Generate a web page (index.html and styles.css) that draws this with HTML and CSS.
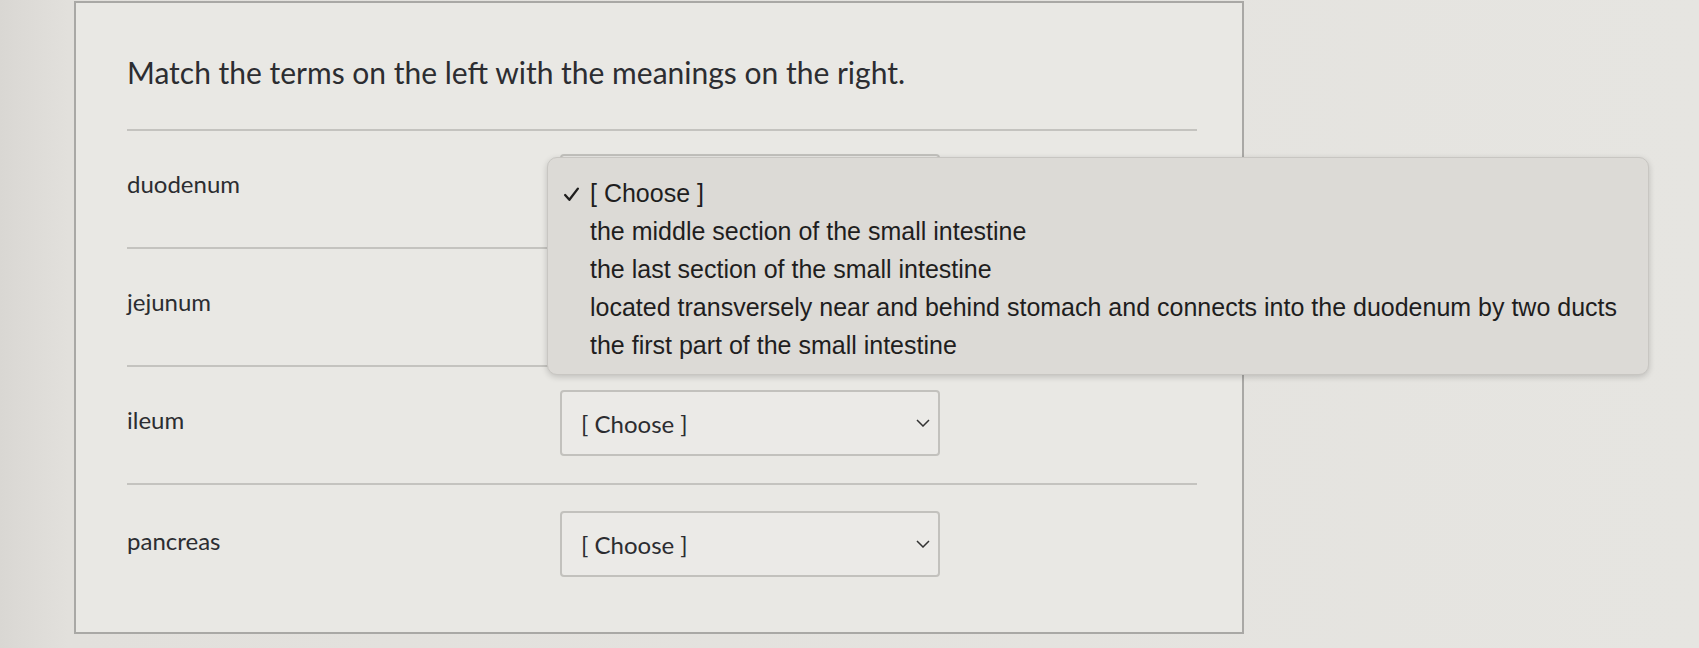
FILE: index.html
```html
<!DOCTYPE html>
<html>
<head>
<meta charset="utf-8">
<link rel="stylesheet" href="styles.css">
</head>
<body>
<div class="page">
  <div class="gutter"></div>
  <div class="card">
    <div class="heading">Match the terms on the left with the meanings on the right.</div>
    <div class="row">
      <div class="term">duodenum</div>
      <div class="select covered"><span>[ Choose ]</span><svg class="chev" viewBox="0 0 14 8"><path d="M1 1l6 6 6-6" fill="none" stroke="#333" stroke-width="1.5"/></svg></div>
    </div>
    <div class="row">
      <div class="term">jejunum</div>
      <div class="select covered"><span>[ Choose ]</span><svg class="chev" viewBox="0 0 14 8"><path d="M1 1l6 6 6-6" fill="none" stroke="#333" stroke-width="1.5"/></svg></div>
    </div>
    <div class="row">
      <div class="term">ileum</div>
      <div class="select"><span>[ Choose ]</span><svg class="chev" viewBox="0 0 14 8"><path d="M1 1l6 6 6-6" fill="none" stroke="#333" stroke-width="1.5"/></svg></div>
    </div>
    <div class="row last">
      <div class="term">pancreas</div>
      <div class="select"><span>[ Choose ]</span><svg class="chev" viewBox="0 0 14 8"><path d="M1 1l6 6 6-6" fill="none" stroke="#333" stroke-width="1.5"/></svg></div>
    </div>
  </div>
  <div class="rest"></div>
  <div class="popup">
    <div class="opt"><svg class="check" viewBox="0 0 16 14"><path d="M2 7.5l4 4.5 8-10.5" fill="none" stroke="#1f1e1e" stroke-width="2.2" stroke-linecap="round" stroke-linejoin="round"/></svg>[ Choose ]</div>
    <div class="opt">the middle section of the small intestine</div>
    <div class="opt">the last section of the small intestine</div>
    <div class="opt">located transversely near and behind stomach and connects into the duodenum by two ducts</div>
    <div class="opt">the first part of the small intestine</div>
  </div>
</div>
</body>
</html>
```
FILE: styles.css
```css
html, body {
  margin: 0;
  padding: 0;
  width: 1699px;
  height: 648px;
  overflow: hidden;
  background: #e3e2de;
}
.page {
  position: relative;
  display: flex;
  height: 648px;
  background: linear-gradient(90deg, #d9d7d3 0%, #e2e0dc 4%, #e6e5e1 100%);
}
.gutter {
  width: 74px;
  flex: none;
}
.card {
  width: 1170px;
  flex: none;
  height: 633px;
  box-sizing: border-box;
  margin-top: 1px;
  border: 2px solid #a9a8a5;
  background: #e9e8e4;
  padding: 0 45px 0 51px;
  font-family: Lato, "Open Sans", sans-serif;
  color: #2c2d31;
}
.heading {
  font-size: 30px;
  height: 128px;
  box-sizing: border-box;
  padding-top: 51px;
  border-bottom: 2px solid #c4c3bf;
  line-height: 36px;
}
.row {
  display: flex;
  align-items: center;
  height: 118px;
  box-sizing: border-box;
  border-bottom: 2px solid #c4c3bf;
  padding-bottom: 4px;
}
.row.last {
  border-bottom: none;
  height: 122px;
}
.term {
  width: 433px;
  font-size: 24px;
  padding-bottom: 8px;
}
.select {
  width: 380px;
  height: 66px;
  box-sizing: border-box;
  border: 2px solid #c2c1bd;
  border-radius: 4px;
  display: flex;
  align-items: center;
  justify-content: space-between;
  padding: 0 8px 0 19px;
  font-size: 24px;
  background: #ebeae7;
}
.select.covered span {
  visibility: hidden;
}
.chev {
  width: 14px;
  height: 8px;
}
.rest {
  flex: 1;
}
.popup {
  position: absolute;
  left: 547px;
  top: 157px;
  width: 1102px;
  height: 218px;
  box-sizing: border-box;
  background: #dcdad6;
  border: 1px solid #c8c6c2;
  border-radius: 10px;
  box-shadow: 0 2px 6px rgba(0,0,0,0.18);
  padding: 16px 0 8px 42px;
  font-family: "Liberation Sans", Arial, sans-serif;
  font-size: 25px;
  line-height: 38px;
  color: #1f1e1e;
}
.opt {
  position: relative;
  white-space: nowrap;
}
.check {
  position: absolute;
  left: -27px;
  top: 13px;
  width: 17px;
  height: 15px;
}
```
